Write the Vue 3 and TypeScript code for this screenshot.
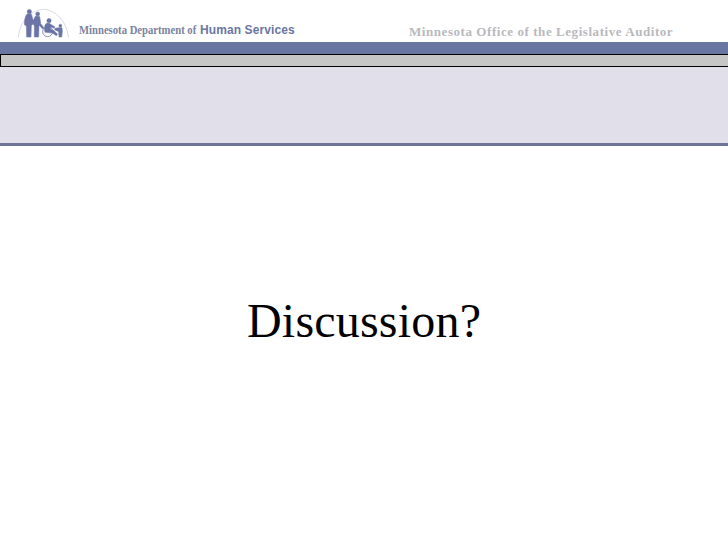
<script setup lang="ts">
const title = 'Discussion?'
</script>

<template>
  <div class="slide">
    <header class="head">
      <div class="brand">
        <svg class="logo" width="56" height="35" viewBox="0 0 168 105" aria-hidden="true">
          <path d="M10 97 C14 50 48 14 85 13 C122 14 156 50 160 97" fill="none" stroke="#cfd0da" stroke-width="2.4" />
          <g fill="#6a74a6" stroke="#6a74a6" stroke-width="1.5">
            <circle cx="43" cy="20" r="6.5" />
            <path d="M36 27 C31 33 27 48 29 60 L34 62 L35 96 H48 L49 62 C52 60 56 52 60 48 L54 44 C52 38 51 30 48 27 Z" />
            <circle cx="68" cy="27" r="6" />
            <path d="M61 34 C57 38 55 50 54 58 L58 62 L58 96 H71 L72 60 L77 66 L84 72 L87 68 L77 56 C76 46 75 38 73 34 Z" />
            <circle cx="102" cy="47" r="6.5" />
            <path d="M94 55 C88 60 87 72 90 82 L112 84 L124 92 L128 88 L116 76 L106 72 L106 66 L118 70 L119 65 L107 58 L104 55 Z" />
            <circle cx="136" cy="62" r="4.5" />
            <path d="M131 68 H141 L142 80 L140 96 H132 L131 80 L119 74 L120 70 Z" />
          </g>
          <circle cx="98" cy="80" r="15" fill="none" stroke="#6a74a6" stroke-width="2.4" />
        </svg>
        <div class="agency"><span class="agency-a">Minnesota Department of</span><span class="agency-b">Human Services</span></div>
      </div>
      <div class="office">Minnesota Office of the Legislative Auditor</div>
    </header>
    <div class="band"></div>
    <div class="bar"></div>
    <div class="panel"></div>
    <div class="rule"></div>
    <main class="content">
      <h1 class="title">{{ title }}</h1>
    </main>
  </div>
</template>

<style scoped>
.slide {
  width: 728px;
  height: 546px;
  background: #fff;
  display: flex;
  flex-direction: column;
  overflow: hidden;
}
.head {
  height: 42px;
  display: flex;
  align-items: flex-start;
  flex: none;
}
.brand {
  display: flex;
  align-items: flex-start;
  width: 409px;
  padding: 5px 0 0 15px;
  box-sizing: border-box;
}
.logo {
  flex: none;
}
.agency {
  display: flex;
  align-items: baseline;
  margin-left: 8px;
  margin-top: 18px;
  white-space: nowrap;
}
.agency-a {
  display: inline-block;
  width: 121px;
  font: 700 13px/14px "Liberation Serif", serif;
  color: #7b84a0;
  transform: scaleX(0.82);
  transform-origin: left center;
}
.agency-b {
  font: 700 12px/14px "Liberation Sans", sans-serif;
  color: #6a76a2;
  letter-spacing: 0.1px;
}
.office {
  margin-top: 24px;
  font: 700 13px/16px "Liberation Serif", serif;
  letter-spacing: 0.56px;
  color: #b9b9bd;
  white-space: nowrap;
}
.band {
  height: 12px;
  flex: none;
  background: #6a76a2;
}
.bar {
  height: 13px;
  flex: none;
  box-sizing: border-box;
  background: #c6c6c6;
  border: 1px solid #000;
  border-right: 0;
}
.panel {
  height: 76px;
  flex: none;
  background: #e0dfea;
}
.rule {
  height: 3px;
  flex: none;
  background: #6c7599;
}
.content {
  flex: 1;
  padding: 147px 0 0 247px;
}
.title {
  margin: 0;
  font: 400 48px/56px "Liberation Serif", serif;
  letter-spacing: 0.2px;
  color: #000;
}
</style>
